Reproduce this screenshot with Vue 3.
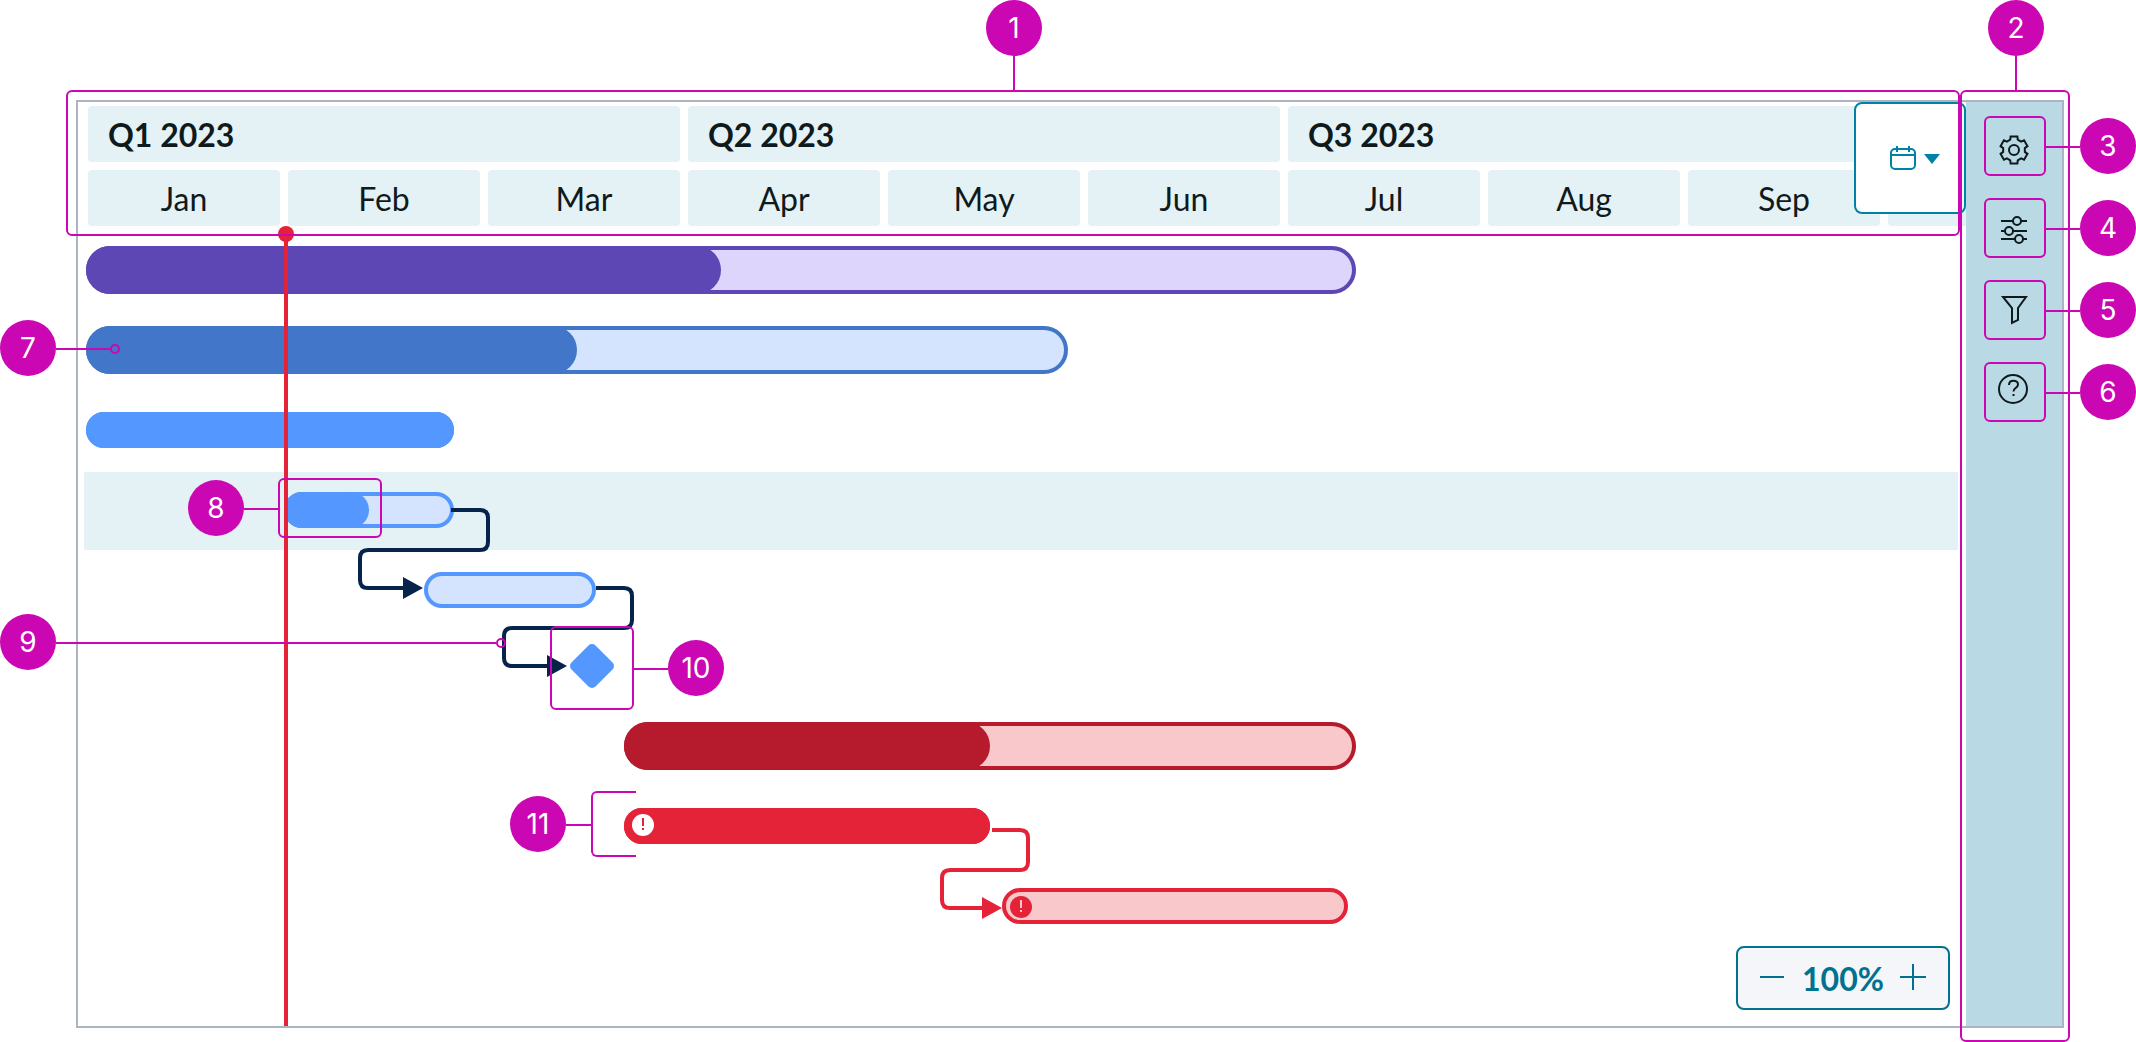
<script setup>
const months = ['Jan', 'Feb', 'Mar', 'Apr', 'May', 'Jun', 'Jul', 'Aug', 'Sep', '']
const quarters = ['Q1 2023', 'Q2 2023', 'Q3 2023', '']

// start, width and done are in timeline pixels (one month is 200)
const tasks = [
  { kind: 'summary', tone: 'purple', start: 2, width: 1270, done: 635 },
  { kind: 'summary', tone: 'blue', start: 2, width: 982, done: 491 },
  { kind: 'task', tone: 'sky', start: 2, width: 368, done: 368 },
  { kind: 'task', tone: 'sky', start: 200, width: 170, done: 85, selected: true },
  { kind: 'task', tone: 'sky', start: 340, width: 172, done: 0 },
  { kind: 'milestone', start: 491 },
  { kind: 'summary', tone: 'crimson', start: 540, width: 732, done: 366 },
  { kind: 'task', tone: 'red', start: 540, width: 366, done: 366, alert: 'light' },
  { kind: 'task', tone: 'red', start: 918, width: 346, done: 0, alert: 'dark' }
]

const tools = [
  { id: 'settings', label: 'Settings', number: 3 },
  { id: 'adjust', label: 'Adjust view', number: 4 },
  { id: 'filter', label: 'Filter', number: 5 },
  { id: 'help', label: 'Help', number: 6 }
]

function gearPoints(cx, cy) {
  const points = []
  for (let tooth = 0; tooth < 6; tooth++) {
    for (const [offset, radius] of [[-20, 11], [-14, 14], [14, 14], [20, 11]]) {
      const angle = ((tooth * 60 - 90 + offset) * Math.PI) / 180
      points.push(`${(cx + radius * Math.cos(angle)).toFixed(2)},${(cy + radius * Math.sin(angle)).toFixed(2)}`)
    }
  }
  return points.join(' ')
}
const gear = gearPoints(28, 32)
</script>

<template>
  <div class="page">
    <div class="frame">
      <main class="chart">
        <div class="timeline">
          <div class="scale">
            <div v-for="(q, i) in quarters" :key="'q' + i" class="quarter">{{ q }}</div>
            <div v-for="(m, i) in months" :key="'m' + i" class="month">{{ m }}</div>
          </div>

          <div class="rows">
            <div
              v-for="(t, i) in tasks"
              :key="i"
              class="row"
              :class="{ selected: t.selected, short: t.kind === 'milestone' }"
            >
              <div v-if="t.kind === 'milestone'" class="milestone" :style="{ marginLeft: t.start + 'px' }"></div>
              <div
                v-else
                class="bar"
                :class="[t.kind, t.tone]"
                :style="{ marginLeft: t.start + 'px', width: t.width + 'px' }"
              >
                <div v-if="t.done" class="done" :style="{ width: t.done + 'px' }"></div>
                <svg v-if="t.alert" class="alert" :class="t.alert" viewBox="0 0 22 22">
                  <circle class="disc" cx="11" cy="11" r="11" />
                  <path class="mark" d="M11 4v8M11 14v2" />
                </svg>
              </div>
            </div>
          </div>

          <svg class="links" width="1888" height="924">
            <g class="link navy">
              <path d="M373 408H402Q410 408 410 416V440Q410 448 402 448H290Q282 448 282 456V478Q282 486 290 486H326" />
              <polygon points="325,475 345,486 325,497" />
              <path d="M518 486H546Q554 486 554 494V518Q554 526 546 526H434Q426 526 426 534V556Q426 564 434 564H470" />
              <polygon points="469,553 489,564 469,575" />
            </g>
            <g class="link scarlet">
              <path d="M914 728H942Q950 728 950 736V760Q950 768 942 768H872Q864 768 864 776V798Q864 806 872 806H905" />
              <polygon points="904,795 924,806 904,817" />
            </g>
          </svg>

          <div class="today"></div>
        </div>

        <button class="date-picker" type="button" aria-label="Choose time scale">
          <svg width="52" height="28" viewBox="0 0 52 28">
            <rect x="2" y="4" width="24" height="20" rx="4" />
            <path d="M2 10H26M8 1V7M20 1V7" />
            <polygon points="35,9 51,9 43,19" />
          </svg>
        </button>

        <div class="zoom">
          <button type="button" aria-label="Zoom out">
            <svg width="26" height="26" viewBox="0 0 26 26"><path d="M0 13H24" /></svg>
          </button>
          <span>100%</span>
          <button type="button" aria-label="Zoom in">
            <svg width="26" height="26" viewBox="0 0 26 26"><path d="M0 13H26M13 0V26" /></svg>
          </button>
        </div>
      </main>

      <aside class="tools">
        <div v-for="tool in tools" :key="tool.id" class="tool">
          <button type="button" :aria-label="tool.label">
            <svg width="58" height="56" viewBox="0 0 58 56">
              <template v-if="tool.id === 'settings'">
                <polygon :points="gear" />
                <circle cx="28" cy="32" r="5" />
              </template>
              <template v-else-if="tool.id === 'adjust'">
                <path d="M15 21H27M35 21H41M15 31H19M27 31H41M15 39H29M37 39H41" />
                <circle cx="31" cy="21" r="4" />
                <circle cx="23" cy="31" r="4" />
                <circle cx="33" cy="39" r="4" />
              </template>
              <path v-else-if="tool.id === 'filter'" d="M17 15H40L32 26V38L26 41V26Z" />
              <template v-else>
                <circle cx="27" cy="25" r="14" />
                <path d="M23 21C23 15 32 15.500 32 20.500C32 24 27.500 23.500 27.500 27.500M27.500 30V32" />
              </template>
            </svg>
          </button>
          <div class="callout side">
            <i class="wire"></i><b class="badge">{{ tool.number }}</b>
          </div>
        </div>
      </aside>
    </div>

    <!-- numbered callouts -->
    <div class="notes">
      <div class="outline header-outline">
        <div class="callout above"><b class="badge">1</b><i class="wire"></i></div>
      </div>
      <div class="outline tools-outline">
        <div class="callout above"><b class="badge">2</b><i class="wire"></i></div>
      </div>
      <div class="callout pin note-7"><b class="badge">7</b><i class="wire"></i><i class="dot"></i></div>
      <div class="callout pin note-8"><b class="badge">8</b><i class="wire"></i></div>
      <div class="outline progress-outline"></div>
      <div class="callout pin note-9"><b class="badge">9</b><i class="wire"></i><i class="dot"></i></div>
      <div class="outline milestone-outline"></div>
      <div class="callout pin note-10"><i class="wire"></i><b class="badge">10</b></div>
      <div class="callout pin note-11"><b class="badge">11</b><i class="wire"></i></div>
      <div class="outline bracket"></div>
    </div>
  </div>
</template>

<style>
body {
  margin: 0;
  background: #fff;
}
</style>

<style scoped>
.page {
  --magenta: #cb06b3;
  position: relative;
  padding: 100px 72px 14px 76px;
  font-family: Lato, sans-serif;
  color: #0f1a1c;
}
.page * {
  box-sizing: border-box;
}
button {
  display: flex;
  align-items: center;
  justify-content: center;
  margin: 0;
  padding: 0;
  border: 0;
  background: none;
  color: inherit;
}
svg {
  display: block;
}

.frame {
  display: flex;
  border: 2px solid #adb3c1;
}
.chart {
  position: relative;
  flex: 1;
  min-width: 0;
}
.timeline {
  position: relative;
  overflow: hidden;
  padding: 4px 0 80px;
}

.scale {
  display: grid;
  grid-template-columns: repeat(12, 192px);
  grid-auto-rows: 56px;
  gap: 8px;
  padding-left: 10px;
  font-size: 32px;
  line-height: 58px;
}
.quarter {
  grid-column: span 3;
  padding-left: 20px;
  border-radius: 4px;
  background: #e4f1f5;
  font-weight: 700;
}
.month {
  border-radius: 4px;
  background: #e4f1f5;
  text-align: center;
}

.rows {
  margin: 4px 8px 0 6px;
}
.row {
  display: flex;
  align-items: center;
  height: 80px;
}
.row.short {
  height: 76px;
  padding-bottom: 4px;
}
.row.selected {
  background: #e4f1f5;
  box-shadow: inset 0 2px #fff;
}
.bar {
  position: relative;
  flex: none;
  height: 36px;
  border-radius: 24px;
  background: var(--light);
  box-shadow: inset 0 0 0 4px var(--strong);
}
.bar.summary {
  height: 48px;
}
.done {
  height: 100%;
  border-radius: 24px;
  background: var(--strong);
}
.purple { --strong: #5d47b4; --light: #ddd5fb; }
.blue { --strong: #4276c8; --light: #d4e4ff; }
.sky { --strong: #5497ff; --light: #d4e4ff; }
.crimson { --strong: #b51b2c; --light: #f8c8cb; }
.red { --strong: #e52338; --light: #f8c8cb; }
.alert {
  position: absolute;
  top: 6px;
  left: 8px;
  width: 22px;
  height: 22px;
}
.alert.dark {
  top: 8px;
}
.mark {
  stroke-width: 2;
}
.light .disc { fill: #fff; }
.light .mark { stroke: #e52338; }
.dark .disc { fill: #e52338; }
.dark .mark { stroke: #f8c8cb; }
.milestone {
  width: 34px;
  height: 34px;
  border-radius: 5px;
  background: #5497ff;
  transform: rotate(45deg);
}

.links {
  position: absolute;
  top: 0;
  left: 0;
}
.link path {
  fill: none;
  stroke-width: 4;
}
.navy path { stroke: #06234b; }
.navy polygon { fill: #06234b; }
.scarlet path { stroke: #e52338; }
.scarlet polygon { fill: #e52338; }

.today {
  position: absolute;
  top: 132px;
  bottom: 0;
  left: 206px;
  width: 4px;
  background: #e52338;
}
.today::before {
  content: '';
  position: absolute;
  top: -8px;
  left: -6px;
  width: 16px;
  height: 16px;
  border-radius: 8px;
  background: #e52338;
}

.date-picker {
  position: absolute;
  top: 0;
  right: 0;
  width: 112px;
  height: 112px;
  padding: 2px 0 0 10px;
  border: 2px solid #0081a6;
  border-radius: 8px;
  background: #fff;
}
.date-picker rect,
.date-picker path {
  fill: none;
  stroke: #0081a6;
  stroke-width: 2;
}
.date-picker polygon {
  fill: #0081a6;
}

.zoom {
  position: absolute;
  right: 16px;
  bottom: 16px;
  display: flex;
  align-items: center;
  justify-content: space-between;
  width: 214px;
  height: 64px;
  padding: 0 22px 2px;
  border: 2px solid #00718f;
  border-radius: 8px;
  background: #f4f6f9;
  color: #00718f;
  font-size: 32px;
  font-weight: 700;
  line-height: 40px;
}
.zoom span {
  padding-top: 4px;
}
.zoom path {
  stroke: currentColor;
  stroke-width: 2;
}

.tools {
  display: flex;
  flex-direction: column;
  gap: 22px;
  width: 96px;
  padding: 14px 0 0 18px;
  background: #b9dae4;
}
.tool {
  position: relative;
  z-index: 1;
  width: 62px;
}
.tool button {
  width: 62px;
  height: 60px;
  border: 2px solid var(--magenta);
  border-radius: 6px;
}
.tool svg {
  fill: none;
  stroke: #0f1a1c;
  stroke-width: 2;
}

.callout {
  position: absolute;
  display: flex;
  align-items: center;
}
.badge {
  flex: none;
  width: 56px;
  height: 56px;
  border-radius: 28px;
  background: var(--magenta);
  color: #fff;
  font: 400 28px/56px Inter, sans-serif;
  text-align: center;
}
.wire {
  width: 34px;
  height: 2px;
  background: var(--magenta);
}
.dot {
  width: 10px;
  height: 10px;
  border: 2px solid var(--magenta);
  border-radius: 5px;
}
.side .wire,
.pin .wire,
.pin .dot {
  margin-top: 2px;
}
.callout.side {
  top: 2px;
  left: 62px;
}
.callout.above {
  right: 0;
  bottom: 100%;
  left: 2px;
  flex-direction: column;
  margin-bottom: 2px;
}
.above .wire {
  width: 2px;
  height: 34px;
}
.outline {
  position: absolute;
  border: 2px solid var(--magenta);
  border-radius: 6px;
}
.header-outline {
  top: 90px;
  right: 176px;
  left: 66px;
  height: 146px;
}
.tools-outline {
  top: 90px;
  right: 66px;
  bottom: 0;
  width: 110px;
}
.note-7 { top: 320px; left: 0; }
.note-7 .wire { width: 54px; }
.note-8 { top: 480px; left: 188px; }
.note-9 { top: 614px; left: 0; }
.note-9 .wire { width: 440px; }
.note-10 { top: 640px; left: 634px; }
.note-11 { top: 796px; left: 510px; }
.note-11 .wire { width: 26px; }
.progress-outline {
  top: 478px;
  left: 278px;
  width: 104px;
  height: 60px;
}
.milestone-outline {
  top: 626px;
  left: 550px;
  width: 84px;
  height: 84px;
}
.bracket {
  top: 791px;
  left: 591px;
  width: 45px;
  height: 66px;
  border-right: 0;
  border-radius: 6px 0 0 6px;
}
</style>
